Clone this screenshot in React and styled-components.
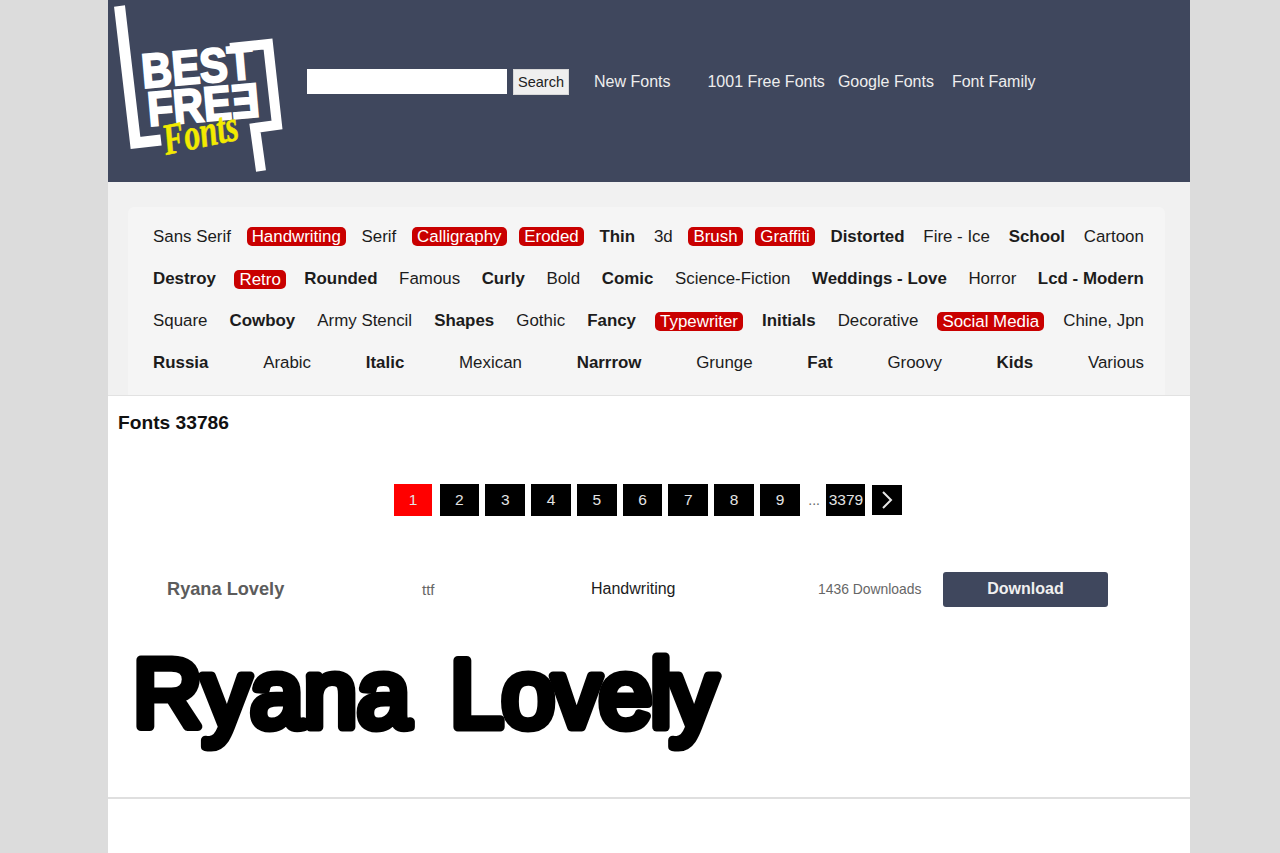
import React from 'react';
import styled, { createGlobalStyle } from 'styled-components';

const GlobalStyle = createGlobalStyle`
html, body {
  margin: 0;
  padding: 0;
  background: #dcdcdc;
  font-family: "Liberation Sans", Arial, sans-serif;
}
`;

const Page = styled.div`
width: 1082px;
min-height: 853px;
margin-left: 108px;
background: #fff;
overflow: hidden;
`;

const Header = styled.header`
height: 182px;
background: #3f475d;
display: flex;
align-items: flex-start;
`;

const LogoBox = styled.a`
display: block;
width: 199px;
height: 182px;
flex: none;
`;

const SearchForm = styled.form`
display: flex;
align-items: center;
gap: 6px;
margin-top: 68px;
height: 27px;
`;

const SearchInput = styled.input`
width: 200px;
height: 25px;
box-sizing: border-box;
border: 0;
background: #fff;
padding: 0 4px;
`;

const SearchButton = styled.button`
width: 56px;
height: 26px;
box-sizing: border-box;
border: 1px solid #d8d8d8;
background: #efefef;
color: #222;
font-family: inherit;
font-size: 14.5px;
padding: 0;
`;

const TopNav = styled.nav`
display: flex;
margin: 68px 0 0 25px;
height: 27px;
align-items: center;
`;

const TopLink = styled.a`
color: #eeeeee;
font-size: 16px;
margin-right: ${p => p.$gap}px;
white-space: nowrap;
`;

const CategoryBand = styled.section`
background: #f1f1f1;
padding: 25px 25px 0 20px;
border-bottom: 1px solid #e2e2e2;
`;

const CategoryPanel = styled.div`
background: #f5f5f5;
border-radius: 6px 6px 0 0;
padding: 8px 21px 11px 25px;
`;

const CategoryRow = styled.div`
display: flex;
justify-content: space-between;
align-items: center;
height: ${p => p.$h}px;
`;

const Category = styled.a`
font-size: 16.9px;
color: ${p => (p.$hot ? '#fff' : '#1c1c1c')};
font-weight: ${p => (p.$bold ? 700 : 400)};
${p => p.$hot && `
  background: #c90000;
  border-radius: 5px;
  padding: 0 5px;
  margin: 0 -3px;
  line-height: 19px;
`}
white-space: nowrap;
`;

const Count = styled.h2`
margin: 0;
padding: 15px 0 0 10px;
font-size: 19.2px;
line-height: 23px;
font-weight: 700;
color: #111;
`;

const Pager = styled.div`
display: flex;
align-items: center;
margin: 50px 0 0 286px;
height: 32px;
`;

const PageNum = styled.a`
box-sizing: border-box;
width: ${p => p.$w}px;
height: 32px;
margin-right: ${p => p.$gap}px;
display: flex;
align-items: center;
justify-content: center;
background: ${p => (p.$active ? '#ff0000' : '#000')};
color: #e4e4e4;
font-size: 15.5px;
`;

const Dots = styled.span`
width: 20.6px;
box-sizing: border-box;
padding-right: 4px;
text-align: center;
font-size: 14px;
color: #666;
`;

const NextButton = styled.a`
width: 30px;
height: 30px;
margin-left: 1px;
background: #000;
display: flex;
align-items: center;
justify-content: center;
`;

const FontRow = styled.div`
display: grid;
grid-template-columns: 255px 169px 227px 125px 165px;
align-items: center;
margin: 56px 0 0 59px;
height: 35px;
`;

const FontName = styled.a`
font-size: 18.2px;
font-weight: 700;
color: #5c5c5c;
`;

const FontType = styled.span`
font-size: 15px;
color: #666;
`;

const FontCategory = styled.a`
font-size: 16px;
color: #1c1c1c;
`;

const Downloads = styled.span`
font-size: 13.9px;
color: #666;
`;

const DownloadButton = styled.a`
height: 35px;
border-radius: 3px;
background: #3f475d;
color: #f0f0f0;
font-size: 16px;
font-weight: 700;
display: flex;
align-items: center;
justify-content: center;
`;

const Specimen = styled.div`
height: 190px;
border-bottom: 2px solid #dfdfdf;
overflow: hidden;
`;

const SpecimenArt = styled.svg`
display: block;
margin-top: 33px;
`;

const row1 = [['Sans Serif'], ['Handwriting', 'hot'], ['Serif'], ['Calligraphy', 'hot'], ['Eroded', 'hot'], ['Thin', 'bold'], ['3d'], ['Brush', 'hot'], ['Graffiti', 'hot'], ['Distorted', 'bold'], ['Fire - Ice'], ['School', 'bold'], ['Cartoon']];
const row2 = [['Destroy', 'bold'], ['Retro', 'hot'], ['Rounded', 'bold'], ['Famous'], ['Curly', 'bold'], ['Bold'], ['Comic', 'bold'], ['Science-Fiction'], ['Weddings - Love', 'bold'], ['Horror'], ['Lcd - Modern', 'bold']];
const row3 = [['Square'], ['Cowboy', 'bold'], ['Army Stencil'], ['Shapes', 'bold'], ['Gothic'], ['Fancy', 'bold'], ['Typewriter', 'hot'], ['Initials', 'bold'], ['Decorative'], ['Social Media', 'hot'], ['Chine, Jpn']];
const row4 = [['Russia', 'bold'], ['Arabic'], ['Italic', 'bold'], ['Mexican'], ['Narrrow', 'bold'], ['Grunge'], ['Fat', 'bold'], ['Groovy'], ['Kids', 'bold'], ['Various']];

const Logo = () => (
  <svg width="199" height="182" viewBox="0 0 199 182">
    <g fill="none" stroke="#fff" strokeLinejoin="miter">
      <path d="M11.5 6 L27.5 143 L53 140" strokeWidth="11" />
      <path d="M122 48 L160 44 L169 125 L147 128 L153 171" strokeWidth="10" />
    </g>
    <g fontFamily="Liberation Sans" fontWeight="700" fill="#fff" stroke="#fff" strokeWidth="2.2">
      <text x="35" y="88" fontSize="48" textLength="112" lengthAdjust="spacingAndGlyphs" transform="rotate(-5 35 88)">BEST</text>
      <text x="41" y="126" fontSize="48" textLength="112" lengthAdjust="spacingAndGlyphs" transform="rotate(-5 41 126)">FREƎ</text>
    </g>
    <text x="58" y="155" transform="rotate(-12 58 155)" fontFamily="Liberation Serif" fontStyle="italic" fontWeight="700" fontSize="44" fill="#f2ea00" stroke="#f2ea00" strokeWidth="0.6" textLength="76" lengthAdjust="spacingAndGlyphs">Fonts</text>
  </svg>
);

const Chevron = () => (
  <svg width="14" height="20" viewBox="0 0 14 20">
    <path d="M3 2 L11 10 L3 18" fill="none" stroke="#e8e8e8" strokeWidth="2" />
  </svg>
);

const Row = ({ items, h }) => (
  <CategoryRow $h={h}>
    {items.map(([name, kind]) => (
      <Category key={name} $hot={kind === 'hot'} $bold={kind === 'bold'}>{name}</Category>
    ))}
  </CategoryRow>
);

export default function App() {
  return (
    <Page>
      <GlobalStyle />
      <Header>
        <LogoBox><Logo /></LogoBox>
        <SearchForm onSubmit={e => e.preventDefault()}>
          <SearchInput type="text" />
          <SearchButton>Search</SearchButton>
        </SearchForm>
        <TopNav>
          <TopLink $gap={37}>New Fonts</TopLink>
          <TopLink $gap={13}>1001 Free Fonts</TopLink>
          <TopLink $gap={18}>Google Fonts</TopLink>
          <TopLink $gap={0}>Font Family</TopLink>
        </TopNav>
      </Header>
      <CategoryBand>
        <CategoryPanel>
          <Row items={row1} h={43.5} />
          <Row items={row2} h={41.5} />
          <Row items={row3} h={42} />
          <Row items={row4} h={41.5} />
        </CategoryPanel>
      </CategoryBand>
      <Count>Fonts 33786</Count>
      <Pager>
        <PageNum $active $w={38} $gap={7.5}>1</PageNum>
        {[2, 3, 4, 5, 6, 7, 8, 9].map(n => <PageNum key={n} $w={39.8} $gap={6}>{n}</PageNum>)}
        <Dots>...</Dots>
        <PageNum $w={39} $gap={6}>3379</PageNum>
        <NextButton><Chevron /></NextButton>
      </Pager>
      <FontRow>
        <FontName>Ryana Lovely</FontName>
        <FontType>ttf</FontType>
        <FontCategory>Handwriting</FontCategory>
        <Downloads>1436 Downloads</Downloads>
        <DownloadButton>Download</DownloadButton>
      </FontRow>
      <Specimen>
        <SpecimenArt width="640" height="130" viewBox="0 0 640 130">
          <text y="87" fontFamily="Liberation Sans" fontSize="96" fill="#000" stroke="#000" strokeWidth="9" strokeLinejoin="round" strokeLinecap="round">
            <tspan x="25">Ryana</tspan>
            <tspan x="342" letterSpacing="-2">Lovely</tspan>
          </text>
        </SpecimenArt>
      </Specimen>
    </Page>
  );
}
